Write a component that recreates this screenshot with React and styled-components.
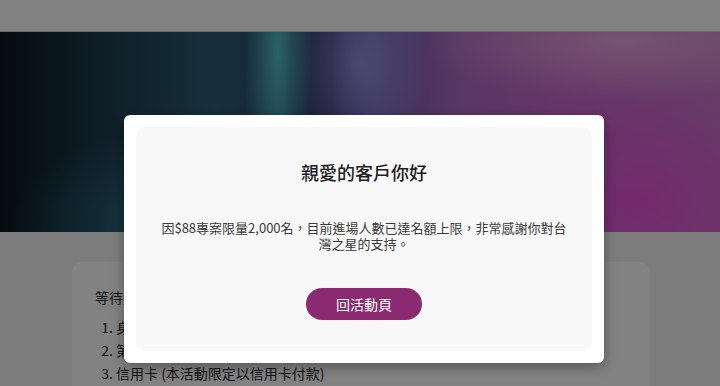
import React from "react";
import styled, { createGlobalStyle } from "styled-components";

const GlobalStyle = createGlobalStyle`
  html, body {
    margin: 0;
    padding: 0;
    background: #f4f4f4;
    font-family: "Noto Sans CJK TC", "Noto Sans", "Liberation Sans", sans-serif;
    overflow: hidden;
  }
`;

const Page = styled.div`
  width: 720px;
  display: flex;
  flex-direction: column;
`;

const Header = styled.header`
  height: 31px;
  flex-shrink: 0;
  background: #ffffff;
  border-bottom: 1px solid #d8dadc;
`;

/* blurred hero picture, drawn with layered gradients */
const Banner = styled.div`
  height: 200px;
  flex-shrink: 0;
  background:
    radial-gradient(ellipse 34px 170px at 278px 20px, rgba(100, 230, 240, 0.75), rgba(100, 230, 240, 0) 100%),
    radial-gradient(ellipse 70px 120px at 360px 30px, rgba(170, 170, 255, 0.7), rgba(170, 170, 255, 0) 100%),
    radial-gradient(ellipse 130px 100px at 385px 185px, rgba(30, 16, 50, 0.9), rgba(30, 16, 50, 0) 100%),
    radial-gradient(ellipse 200px 60px at 620px 10px, rgba(255, 210, 235, 0.55), rgba(255, 210, 235, 0) 100%),
    radial-gradient(ellipse 180px 120px at 640px 170px, rgba(235, 70, 220, 0.7), rgba(235, 70, 220, 0) 100%),
    radial-gradient(ellipse 150px 90px at 160px 190px, rgba(60, 150, 175, 0.45), rgba(60, 150, 175, 0) 100%),
    linear-gradient(90deg, #0a1820 0%, #1a3646 12%, #2c5e74 30%, #28446a 41%, #322e62 46%, #6a5aa8 52%, #b06cc4 64%, #c868cc 80%, #c878c8 100%);
`;

const Content = styled.main`
  height: 155px;
  box-sizing: border-box;
  padding: 30px 70px 0 72px;
`;

const Card = styled.section`
  background: #ffffff;
  border-radius: 10px 10px 0 0;
  height: 100%;
  box-sizing: border-box;
  padding: 25px 24px 0 23px;
  color: #2a2a2a;
  font-size: 14px;
`;

const Lead = styled.p`
  margin: 0 0 9px;
  line-height: 20px;
`;

const Steps = styled.ol`
  margin: 0;
  padding-left: 21px;
  li {
    line-height: 23px;
  }
`;

const Overlay = styled.div`
  position: fixed;
  inset: 0;
  background: rgba(0, 0, 0, 0.49);
  display: flex;
  justify-content: center;
  align-items: flex-start;
  padding: 115px 0 0 8px;
`;

const Modal = styled.div`
  width: 456px;
  height: 224px;
  background: #ffffff;
  border-radius: 6px;
  padding: 12px;
  box-shadow: 0 4px 14px rgba(0, 0, 0, 0.35);
`;

const Inner = styled.div`
  height: 100%;
  box-sizing: border-box;
  background: #f8f8f8;
  border-radius: 10px;
  padding: 32px 20px 0;
  display: flex;
  flex-direction: column;
  align-items: center;
  text-align: center;
`;

const Title = styled.h2`
  margin: 0;
  font-size: 18px;
  font-weight: 500;
  line-height: 26px;
  color: #1e1e1e;
`;

const Message = styled.p`
  margin: 35px 0 0;
  font-size: 13px;
  line-height: 16px;
  color: #3a3a3a;
`;

const BackButton = styled.button`
  margin-top: 36px;
  width: 116px;
  height: 32px;
  border: none;
  border-radius: 16px;
  background: #8b2a70;
  color: #ffffff;
  font-family: inherit;
  font-size: 14px;
  cursor: pointer;
`;

export default function App() {
  return (
    <>
      <GlobalStyle />
      <Page>
        <Header />
        <Banner />
        <Content>
          <Card>
            <Lead>等待進場時請先準備以下資料：</Lead>
            <Steps>
              <li>身分證字號</li>
              <li>第二證件資料</li>
              <li>信用卡 (本活動限定以信用卡付款)</li>
            </Steps>
          </Card>
        </Content>
      </Page>
      <Overlay>
        <Modal>
          <Inner>
            <Title>親愛的客戶你好</Title>
            <Message>
              因$88專案限量2,000名，目前進場人數已達名額上限，非常感謝你對台灣之星的支持。
            </Message>
            <BackButton>回活動頁</BackButton>
          </Inner>
        </Modal>
      </Overlay>
    </>
  );
}
